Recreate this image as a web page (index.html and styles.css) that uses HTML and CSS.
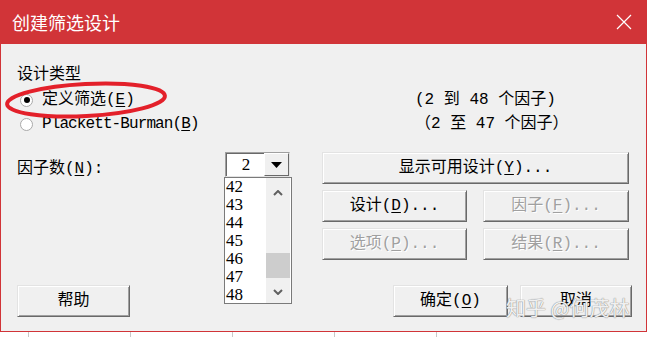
FILE: index.html
```html
<!DOCTYPE html>
<html lang="zh-CN">
<head>
    <meta charset="UTF-8">
    <meta name="viewport" content="width=device-width, initial-scale=1.0">
    <title>创建筛选设计</title>
    <link rel="stylesheet" href="styles.css">
</head>
<body>
<div class="dialog">
	<header class="title-bar">
		<span class="title-text">创建筛选设计</span>
		<svg class="close-icon" width="16" height="16" viewBox="0 0 16 16">
			<path d="M1 1 L15 15 M15 1 L1 15" stroke="#fff" stroke-width="1.2" fill="none"/>
		</svg>
	</header>
	<main class="dialog-body">
		<div class="group-label">设计类型</div>
		<div class="type-row">
			<div class="type-options">
				<div class="radio-item">
					<span class="radio checked"></span>
					<span class="radio-text">定义筛选(<u>E</u>)</span>
				</div>
				<div class="radio-item">
					<span class="radio"></span>
					<span class="radio-text tight">Plackett-Burman(<u>B</u>)</span>
				</div>
			</div>
			<div class="type-ranges">
				<div class="range-line">(2 到 48 个因子)</div>
				<div class="range-line">（2 至 47 个因子）</div>
			</div>
		</div>

		<div class="main-row">
			<div class="col-left">
				<div class="field-label">因子数(<u>N</u>):</div>
				<button class="btn btn-help">帮助</button>
			</div>
			<div class="col-factor">
				<div class="combo">
					<span class="combo-value">2</span>
					<span class="combo-btn">
						<svg width="11" height="6" viewBox="0 0 11 6"><path d="M0 0 H11 L5.5 6 Z" fill="#000"/></svg>
					</span>
				</div>
				<div class="listbox">
					<ul class="list-items">
						<li>42</li>
						<li>43</li>
						<li>44</li>
						<li>45</li>
						<li>46</li>
						<li>47</li>
						<li>48</li>
					</ul>
					<div class="scrollbar">
						<div class="scroll-up">
							<svg width="10" height="6" viewBox="0 0 10 6"><path d="M1 5 L5 1 L9 5" stroke="#606060" stroke-width="2" fill="none"/></svg>
						</div>
						<div class="scroll-track"><div class="scroll-thumb"></div></div>
						<div class="scroll-down">
							<svg width="10" height="6" viewBox="0 0 10 6"><path d="M1 1 L5 5 L9 1" stroke="#606060" stroke-width="2" fill="none"/></svg>
						</div>
					</div>
				</div>
			</div>
			<div class="col-right">
				<div class="btn-grid">
					<button class="btn btn-wide">显示可用设计(<u>Y</u>)...</button>
					<button class="btn">设计(<u>D</u>)...</button>
					<button class="btn disabled">因子(<u>F</u>)...</button>
					<button class="btn disabled">选项(<u>P</u>)...</button>
					<button class="btn disabled">结果(<u>R</u>)...</button>
				</div>
				<div class="ok-row">
					<button class="btn btn-ok">确定(<u>O</u>)</button>
					<button class="btn btn-cancel">取消</button>
				</div>
			</div>
		</div>

		<!-- 标注圈 -->
		<svg class="mark-ellipse" width="172" height="46" viewBox="0 0 172 46">
			<ellipse cx="83" cy="23" rx="79" ry="16" transform="rotate(-3 83 23)" stroke="#e3202a" stroke-width="4" fill="none"/>
		</svg>
		<div class="watermark">知乎 @何茂林</div>
	</main>
</div>
<div class="under-strip">
	<span></span><span></span><span></span><span></span><span></span><span></span>
</div>
</body>
</html>
```

FILE: styles.css
```css
*{
	padding:0;margin:0;box-sizing:border-box;
}
body{
	font-family:"Liberation Mono","Noto Sans CJK SC",monospace;
	font-size:16px;line-height:20px;color:#000;
	background:#fff;
	width:647px;height:337px;overflow:hidden;
}
ul{list-style:none}
u{text-decoration:underline;text-underline-offset:2px}

.dialog{
	width:647px;
	height:332px;
	display:flex;
	flex-direction:column;
	background:#f0f0f0;
	border:1px solid #d13438;
	border-top:0;
}
.title-bar{
	height:44px;
	margin:0 -1px;
	background:#d13438;
	display:flex;
	align-items:center;
	justify-content:space-between;
	padding:0 15px 0 12px;
}
.title-text{
	font-family:"Noto Sans CJK SC",sans-serif;
	font-size:18px;
	color:#fff;
	line-height:20px;
}
.close-icon{display:block;}

.dialog-body{
	position:relative;
	flex:1;
	padding:21px 0 0 16px;
}
.group-label{line-height:20px;}

.type-row{
	display:flex;
	margin-top:3px;
}
.type-options{width:398px;}
.radio-item{
	height:24px;
	display:flex;
	align-items:center;
	padding-left:3px;
}
.radio{
	width:13px;height:13px;
	border-radius:50%;
	background:#fff;
	border:1px solid #a9a9a9;
	margin-right:9px;
	display:flex;
	align-items:center;
	justify-content:center;
}
.radio.checked::after{
	content:"";
	width:6px;height:6px;
	border-radius:50%;
	background:#000;
}
.tight{letter-spacing:-0.9px;}
.range-line{line-height:24px;}

.main-row{
	display:flex;
	margin-top:16px;
	height:165px;
}
.col-left{
	width:207px;
	display:flex;
	flex-direction:column;
	align-items:flex-start;
}
.field-label{margin-top:8px;line-height:18px;}
.col-factor{width:68px;}
.col-right{
	width:310px;
	margin-left:30px;
	display:flex;
	flex-direction:column;
}

.btn{
	font:inherit;
	color:#000;
	background:#f0f0f0;
	height:32px;
	border:1px solid;
	border-color:#e3e3e3 #696969 #696969 #e3e3e3;
	box-shadow:inset 1px 1px #fff,inset -1px -1px #a0a0a0;
	display:flex;
	align-items:center;
	justify-content:center;
}
.btn.disabled{color:#a0a0a0;text-shadow:1px 1px #fff;}
.btn-help{width:113px;margin-top:auto;}

.btn-grid{
	width:307px;
	display:grid;
	grid-template-columns:145px 146px;
	column-gap:16px;
	row-gap:6px;
}
.btn-wide{grid-column:1 / 3;}
.ok-row{
	margin-top:auto;
	display:flex;
	justify-content:flex-end;
	gap:12px;
}
.btn-ok{width:115px;}
.btn-cancel{width:112px;}

.combo{
	margin-left:1px;
	width:65px;height:25px;
	display:flex;
	background:#fff;
	border:1px solid;
	border-color:#a0a0a0 #e3e3e3 #e3e3e3 #a0a0a0;
	box-shadow:inset 1px 1px #696969;
}
.combo-value{
	flex:1;
	font-family:"Liberation Serif",serif;
	font-size:17px;
	line-height:23px;
	text-align:center;
	padding-left:2px;
}
.combo-btn{
	width:25px;
	background:#f0f0f0;
	border:1px solid;
	border-color:#fff #696969 #696969 #fff;
	display:flex;
	align-items:center;
	justify-content:center;
}
.listbox{
	height:127px;
	display:flex;
	background:#fff;
	border:1px solid #7a7a7a;
	overflow:hidden;
}
.list-items{
	flex:1;
	padding-left:1px;
	font-family:"Liberation Serif",serif;
	font-size:17px;
	line-height:18px;
}
.list-items li{height:18px;}
.scrollbar{
	width:24px;
	margin-right:1px;
	background:#f0f0f0;
	display:flex;
	flex-direction:column;
}
.scroll-up{height:30px;display:flex;align-items:center;justify-content:center;}
.scroll-track{height:72px;}
.scroll-thumb{margin-top:45px;height:25px;background:#cdcdcd;}
.scroll-down{height:23px;display:flex;align-items:center;justify-content:center;}

.mark-ellipse{
	position:absolute;
	left:2px;top:33px;
}
.watermark{
	position:absolute;
	left:505px;top:251px;
	font-family:"Noto Sans CJK SC",sans-serif;
	font-size:20px;
	line-height:26px;
	color:rgba(255,255,255,0.9);
	text-shadow:0 0 1px #8a8a8a,0 0 1px #8a8a8a;
}

.under-strip{
	height:5px;
	display:flex;
}
.under-strip span{
	width:102px;
	border-left:1px solid #c8c8c8;
}
.under-strip span:first-child{width:28px;border-left:0;}
```
